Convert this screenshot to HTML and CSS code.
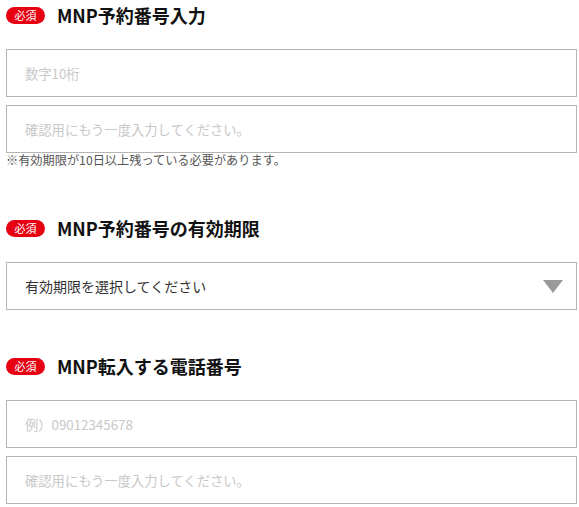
FILE: index.html
```html
<!DOCTYPE html>
<html lang="ja">
<head>
    <meta charset="UTF-8">
    <meta name="viewport" content="width=device-width, initial-scale=1.0">
    <title>MNP</title>
    <link rel="stylesheet" href="styles.css">
</head>
<body>
    <div class="form">
        <div class="section">
            <div class="heading">
                <span class="badge">必須</span>
                <h2 class="title">MNP予約番号入力</h2>
            </div>
            <div class="fields">
                <input type="text" class="field" placeholder="数字10桁">
                <input type="text" class="field" placeholder="確認用にもう一度入力してください。">
            </div>
            <p class="note">※有効期限が10日以上残っている必要があります。</p>
        </div>
        <div class="section second">
            <div class="heading">
                <span class="badge">必須</span>
                <h2 class="title">MNP予約番号の有効期限</h2>
            </div>
            <div class="fields">
                <div class="select-wrap">
                    <select class="field select">
                        <option>有効期限を選択してください</option>
                    </select>
                    <span class="arrow"></span>
                </div>
            </div>
        </div>
        <div class="section third">
            <div class="heading">
                <span class="badge">必須</span>
                <h2 class="title">MNP転入する電話番号</h2>
            </div>
            <div class="fields">
                <input type="text" class="field" placeholder="例）09012345678">
                <input type="text" class="field" placeholder="確認用にもう一度入力してください。">
            </div>
        </div>
    </div>
</body>
</html>
```

FILE: styles.css
```css
body {
    margin: 0;
    background: #fff;
    font-family: "Noto Sans CJK JP", "Noto Sans", sans-serif;
    color: #333;
}
.form {
    padding: 0 2px 0 6px;
}
.heading {
    display: flex;
    align-items: center;
    height: 30px;
}
.badge {
    display: inline-flex;
    align-items: center;
    justify-content: center;
    width: 39px;
    height: 17px;
    border-radius: 9px;
    background: #e60012;
    color: #fff;
    font-size: 11px;
    line-height: 1;
}
.title {
    margin: 0 0 0 12px;
    font-size: 18px;
    font-weight: bold;
    color: #111;
    line-height: 1;
}
.fields {
    display: flex;
    flex-direction: column;
    gap: 8px;
    margin-top: 19px;
}
.field {
    box-sizing: border-box;
    width: 100%;
    height: 48px;
    margin: 0;
    padding: 0 18px;
    border: 1px solid #b5b5b5;
    border-radius: 0;
    background: #fff;
    font-family: inherit;
    font-size: 13.3px;
    color: #333;
    outline: none;
}
.field::placeholder {
    color: #c8c8c8;
}
.note {
    margin: 0;
    font-size: 12.2px;
    line-height: 14px;
    color: #555;
}
.second {
    margin-top: 46px;
}
.third {
    margin-top: 41px;
}
.select-wrap {
    position: relative;
}
.select {
    appearance: none;
    -webkit-appearance: none;
    font-size: 14px;
    color: #333;
}
.arrow {
    position: absolute;
    right: 14px;
    top: 18px;
    width: 0;
    height: 0;
    border-left: 10px solid transparent;
    border-right: 10px solid transparent;
    border-top: 13px solid #9a9a9a;
}
```
